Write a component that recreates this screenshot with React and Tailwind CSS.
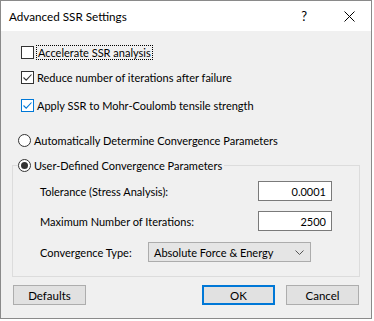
import { useState } from "react";

// CHECKBOX LIKE THE WIN10 ONE
function Check({ checked, hover }) {
  const border = hover ? "border-[#0078d7]" : "border-[#333333]";
  const stroke = hover ? "#0078d7" : "#333333";
  return (
    <span
      className={`flex h-[13px] w-[13px] shrink-0 items-center justify-center border bg-white ${border}`}
    >
      {checked && (
        <svg width="11" height="11" viewBox="0 0 11 11">
          <path d="M1.5 5.5 L4.2 8.2 L9.5 2.5" fill="none" stroke={stroke} strokeWidth="1.1" />
        </svg>
      )}
    </span>
  );
}

function Radio({ checked }) {
  return (
    <span className="flex h-[13px] w-[13px] shrink-0 items-center justify-center rounded-full border border-[#333333] bg-white">
      {checked && <span className="h-[7px] w-[7px] rounded-full bg-[#333333]" />}
    </span>
  );
}

function Button({ children, focused }) {
  return (
    <button
      className={`h-[20px] w-[73px] bg-[#e1e1e1] text-[11.5px] text-black ${
        focused ? "border-2 border-[#0078d7]" : "border border-[#adadad]"
      }`}
    >
      {children}
    </button>
  );
}

export default function App() {
  const [tol, setTol] = useState("0.0001");
  const [iter, setIter] = useState("2500");

  return (
    <div
      className="h-[319px] w-[372px] border border-[#8a8a8a] bg-[#f0f0f0] text-[11px] leading-[15px] text-black"
      style={{ fontFamily: 'Lato, "Noto Sans", sans-serif' }}
    >
      {/* TITLE BAR */}
      <div className="flex h-[30px] items-center bg-white pl-[8px]">
        <span className="flex-1 text-[11.7px]">Advanced SSR Settings</span>
        <span className="mr-[37px] text-[13px]">?</span>
        <svg className="mr-[16px]" width="11" height="11" viewBox="0 0 11 11">
          <path d="M0.5 0.5 L10.5 10.5 M10.5 0.5 L0.5 10.5" stroke="#000" strokeWidth="1" />
        </svg>
      </div>

      {/* CHECKBOXES */}
      <div className="flex flex-col pl-[20px] pt-[15px]">
        <label className="flex h-[13px] items-center">
          <Check />
          <span className="ml-[2px] border border-dotted border-black px-[1px] leading-[13px]">
            Accelerate SSR analysis
          </span>
        </label>
        <label className="mt-[12px] flex h-[13px] items-center">
          <Check checked />
          <span className="ml-[3px]">Reduce number of iterations after failure</span>
        </label>
        <label className="mt-[15px] flex h-[13px] items-center">
          <Check checked hover />
          <span className="ml-[3px]">Apply SSR to Mohr-Coulomb tensile strength</span>
        </label>
      </div>

      {/* RADIOS */}
      <div className="pl-[17px] pt-[22px]">
        <label className="flex h-[13px] items-center">
          <Radio />
          <span className="ml-[3px]">Automatically Determine Convergence Parameters</span>
        </label>
      </div>

      <fieldset className="mx-[11px] mt-[12px] h-[118px] border border-[#dcdcdc]">
        <legend className="ml-[5px] flex h-[13px] items-center bg-[#f0f0f0] pr-[2px]">
          <Radio checked />
          <span className="ml-[3px]">User-Defined Convergence Parameters</span>
        </legend>

        <div className="flex flex-col px-[27px]">
          <div className="mt-[9px] flex h-[20px] items-center">
            <span className="flex-1">Tolerance (Stress Analysis):</span>
            <input
              value={tol}
              onChange={(e) => setTol(e.target.value)}
              className="h-[20px] w-[74px] border border-[#7a7a7a] bg-white pr-[5px] text-right outline-none"
            />
          </div>
          <div className="mt-[10px] flex h-[20px] items-center">
            <span className="flex-1">Maximum Number of Iterations:</span>
            <input
              value={iter}
              onChange={(e) => setIter(e.target.value)}
              className="h-[20px] w-[74px] border border-[#7a7a7a] bg-white pr-[5px] text-right outline-none"
            />
          </div>
          <div className="mt-[11px] flex h-[20px] items-center">
            <span className="w-[108px]">Convergence Type:</span>
            <div className="flex h-[20px] w-[163px] items-center border border-[#acacac] bg-[#e5e5e5] pl-[5px] pr-[6px]">
              <span className="flex-1">Absolute Force &amp; Energy</span>
              <svg width="9" height="5" viewBox="0 0 9 5">
                <path d="M0.5 0.5 L4.5 4.5 L8.5 0.5" fill="none" stroke="#555" strokeWidth="1" />
              </svg>
            </div>
          </div>
        </div>
      </fieldset>

      {/* BUTTONS */}
      <div className="mt-[8px] flex px-[12px]">
        <Button>Defaults</Button>
        <div className="flex-1" />
        <Button focused>OK</Button>
        <div className="w-[11px]" />
        <Button>Cancel</Button>
      </div>
    </div>
  );
}
